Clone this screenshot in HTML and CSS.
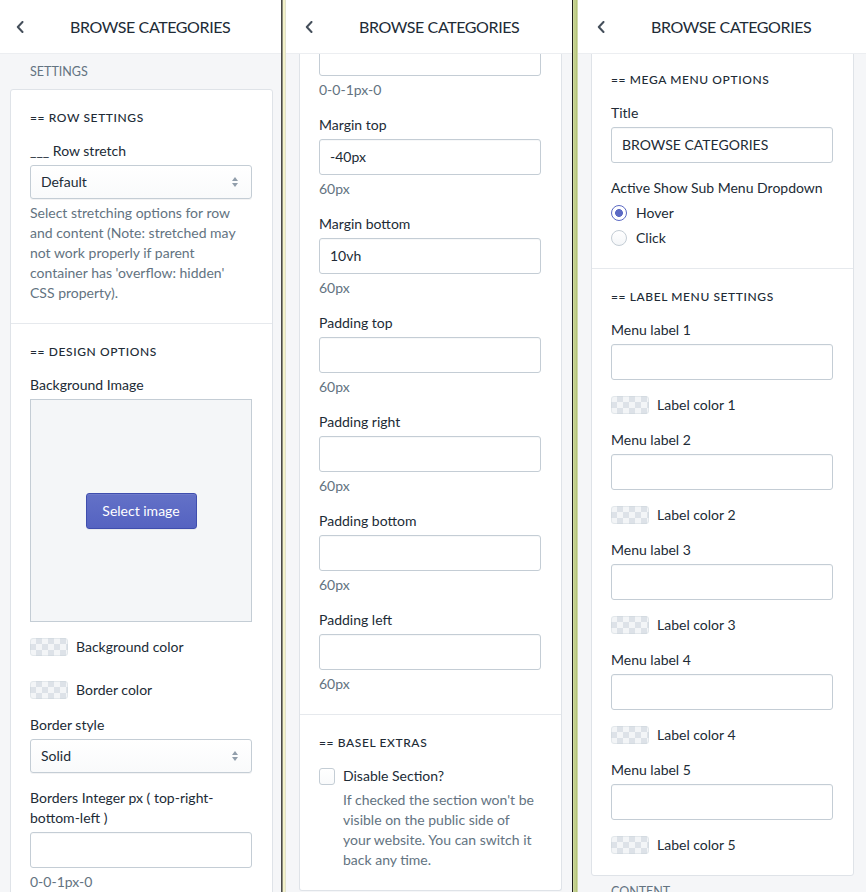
FILE: index.html
```html
<!DOCTYPE html>
<html lang="en">
<head>
<meta charset="utf-8">
<title>Browse Categories</title>
<link rel="stylesheet" href="styles.css">
</head>
<body>
<div class="screen">

  <section class="panel p1">
    <div class="sheet">
      <header class="topbar">
        <svg class="chev" width="8" height="12" viewBox="0 0 8 12"><path d="M6.5 1 L1.8 6 L6.5 11" fill="none" stroke="#454f5b" stroke-width="2" stroke-linecap="round" stroke-linejoin="round"/></svg>
        <h1 class="title">BROWSE CATEGORIES</h1>
      </header>
      <div class="scroll">
        <div class="content">
          <div class="heading">SETTINGS</div>
          <div class="card">
            <div class="sect">
              <div class="sect-title">== ROW SETTINGS</div>
              <div class="field">
                <div class="label">___ Row stretch</div>
                <div class="select"><span>Default</span><i class="arrows"></i></div>
                <div class="help">Select stretching options for row and content (Note: stretched may not work properly if parent container has 'overflow: hidden' CSS property).</div>
              </div>
            </div>
            <div class="sect">
              <div class="sect-title">== DESIGN OPTIONS</div>
              <div class="field">
                <div class="label">Background Image</div>
                <div class="imgbox"><button class="btn">Select image</button></div>
              </div>
              <div class="color-row"><span class="swatch"></span><span>Background color</span></div>
              <div class="color-row tight"><span class="swatch"></span><span>Border color</span></div>
              <div class="field">
                <div class="label">Border style</div>
                <div class="select"><span>Solid</span><i class="arrows"></i></div>
              </div>
              <div class="field">
                <div class="label">Borders Integer px ( top-right-bottom-left )</div>
                <div class="input"></div>
                <div class="help">0-0-1px-0</div>
              </div>
            </div>
          </div>
        </div>
      </div>
    </div>
  </section>

  <div class="sep sep-a"></div>

  <section class="panel p2">
    <div class="sheet">
      <header class="topbar">
        <svg class="chev" width="8" height="12" viewBox="0 0 8 12"><path d="M6.5 1 L1.8 6 L6.5 11" fill="none" stroke="#454f5b" stroke-width="2" stroke-linecap="round" stroke-linejoin="round"/></svg>
        <h1 class="title">BROWSE CATEGORIES</h1>
      </header>
      <div class="scroll">
        <div class="content">
          <div class="card open-top">
            <div class="sect">
              <div class="field first">
                <div class="input"></div>
                <div class="help">0-0-1px-0</div>
              </div>
              <div class="field">
                <div class="label">Margin top</div>
                <div class="input">-40px</div>
                <div class="help">60px</div>
              </div>
              <div class="field">
                <div class="label">Margin bottom</div>
                <div class="input">10vh</div>
                <div class="help">60px</div>
              </div>
              <div class="field">
                <div class="label">Padding top</div>
                <div class="input"></div>
                <div class="help">60px</div>
              </div>
              <div class="field">
                <div class="label">Padding right</div>
                <div class="input"></div>
                <div class="help">60px</div>
              </div>
              <div class="field">
                <div class="label">Padding bottom</div>
                <div class="input"></div>
                <div class="help">60px</div>
              </div>
              <div class="field">
                <div class="label">Padding left</div>
                <div class="input"></div>
                <div class="help">60px</div>
              </div>
            </div>
            <div class="sect">
              <div class="sect-title">== BASEL EXTRAS</div>
              <div class="check-row"><span class="checkbox"></span><span>Disable Section?</span></div>
              <div class="help indent">If checked the section won't be visible on the public side of your website. You can switch it back any time.</div>
            </div>
          </div>
        </div>
      </div>
    </div>
  </section>

  <div class="sep sep-b"></div>

  <section class="panel p3">
    <div class="sheet">
      <header class="topbar">
        <svg class="chev" width="8" height="12" viewBox="0 0 8 12"><path d="M6.5 1 L1.8 6 L6.5 11" fill="none" stroke="#454f5b" stroke-width="2" stroke-linecap="round" stroke-linejoin="round"/></svg>
        <h1 class="title">BROWSE CATEGORIES</h1>
      </header>
      <div class="scroll">
        <div class="content">
          <div class="card">
            <div class="sect">
              <div class="sect-title">== MEGA MENU OPTIONS</div>
              <div class="field">
                <div class="label">Title</div>
                <div class="input">BROWSE CATEGORIES</div>
              </div>
              <div class="field">
                <div class="label">Active Show Sub Menu Dropdown</div>
                <div class="radio-row"><span class="radio on"></span><span>Hover</span></div>
                <div class="radio-row"><span class="radio"></span><span>Click</span></div>
              </div>
            </div>
            <div class="sect">
              <div class="sect-title">== LABEL MENU SETTINGS</div>
              <div class="field">
                <div class="label">Menu label 1</div>
                <div class="input"></div>
              </div>
              <div class="color-row"><span class="swatch"></span><span>Label color 1</span></div>
              <div class="field">
                <div class="label">Menu label 2</div>
                <div class="input"></div>
              </div>
              <div class="color-row"><span class="swatch"></span><span>Label color 2</span></div>
              <div class="field">
                <div class="label">Menu label 3</div>
                <div class="input"></div>
              </div>
              <div class="color-row"><span class="swatch"></span><span>Label color 3</span></div>
              <div class="field">
                <div class="label">Menu label 4</div>
                <div class="input"></div>
              </div>
              <div class="color-row"><span class="swatch"></span><span>Label color 4</span></div>
              <div class="field">
                <div class="label">Menu label 5</div>
                <div class="input"></div>
              </div>
              <div class="color-row"><span class="swatch"></span><span>Label color 5</span></div>
            </div>
          </div>
          <div class="heading after">CONTENT</div>
        </div>
      </div>
    </div>
  </section>

</div>
</body>
</html>
```

FILE: styles.css
```css
* { box-sizing: border-box; }

html, body {
  margin: 0;
  padding: 0;
}

body {
  width: 866px;
  height: 892px;
  overflow: hidden;
  font-family: Lato, "Liberation Sans", sans-serif;
  font-size: 14px;
  line-height: 20px;
  color: #212b36;
  background: #f4f6f8;
}

.screen {
  display: flex;
  height: 892px;
}

.panel {
  flex: none;
  height: 892px;
  overflow: hidden;
  background: #f5f6f8;
}

.p1 { width: 281px; }
.p2 { width: 286px; }
.p3 { width: 288px; }

.sheet {
  width: 289px;
  height: 892px;
  display: flex;
  flex-direction: column;
}

.p1 .sheet { margin-left: -3px; }

.sep { flex: none; height: 892px; }
.sep-a {
  width: 5px;
  background: linear-gradient(to right, #4a4a46 0 1px, #8d8d80 1px 2px, #f3f2c9 2px 4px, #e2e2cc 4px 5px);
}
.sep-b {
  width: 6px;
  background: linear-gradient(to right, #1d1d1b 0 1px, #cdd99d 1px 2px, #c2cf8c 2px 4px, #b5c37b 4px 5px, #d0dbac 5px 6px);
}

/* header */
.topbar {
  position: relative;
  z-index: 2;
  flex: none;
  height: 54px;
  display: flex;
  align-items: center;
  padding-left: 19px;
  background: #fff;
  border-bottom: 1px solid #eceef1;
}

.chev { flex: none; display: block; }

.title {
  margin: 0 0 0 46px;
  font-size: 16px;
  font-weight: 400;
  color: #212b36;
  letter-spacing: -0.4px;
  white-space: nowrap;
}

.scroll {
  flex: 1;
  overflow: hidden;
}

.p2 .content { margin-top: -14px; }
.p3 .content { margin-top: -3px; }

.heading {
  padding: 8px 20px 7px 33px;
  font-size: 12.5px;
  color: #637381;
  letter-spacing: 0;
}
.heading.after { padding-top: 6px; }

.card {
  margin: 0 13px 0 13px;
  background: #fff;
  border: 1px solid #dfe3e8;
  border-radius: 3px;
}
.card.open-top {
  border-top: none;
  border-radius: 0 0 3px 3px;
}

.sect {
  padding: 19px 20px 20px 19px;
}
.sect + .sect { border-top: 1px solid #e6e9ed; }
.open-top .sect:first-child { padding-top: 0; }

.sect-title {
  line-height: 18px;
  font-size: 12px;
  font-weight: 500;
  letter-spacing: 0.6px;
  color: #212b36;
}

.field { margin-top: 14px; }
.field + .field, .color-row + .field { margin-top: 15px; }
.field.first { margin-top: 0; }

.label { line-height: 20px; }

.input, .select {
  margin-top: 4px;
  height: 36px;
  display: flex;
  align-items: center;
  padding: 0 10px;
  border: 1px solid #c4cdd5;
  border-radius: 3px;
  background: #fff;
  box-shadow: inset 0 1px 0 0 rgba(99, 115, 129, 0.05);
  color: #212b36;
}
.field.first .input { margin-top: 0; }

.select {
  height: 34px;
  justify-content: space-between;
  background: linear-gradient(#fff, #f9fafb);
  box-shadow: 0 1px 0 0 rgba(22, 29, 37, 0.05);
  padding-right: 12px;
}

.arrows {
  width: 7px;
  height: 10px;
  position: relative;
  display: block;
}
.arrows::before, .arrows::after {
  content: "";
  position: absolute;
  left: 0;
  border-left: 3.5px solid transparent;
  border-right: 3.5px solid transparent;
}
.arrows::before { top: 0; border-bottom: 4px solid #919eab; }
.arrows::after { bottom: 0; border-top: 4px solid #919eab; }

.help {
  margin-top: 4px;
  color: #637381;
  line-height: 20px;
}
.help.indent { padding-left: 24px; padding-right: 4px; }

.imgbox {
  margin-top: 4px;
  height: 223px;
  border: 1px solid #c4cdd5;
  background: #f4f6f8;
  display: flex;
  align-items: center;
  justify-content: center;
}

.btn {
  width: 111px;
  height: 36px;
  border: 1px solid #3f4eae;
  border-radius: 3px;
  background: linear-gradient(180deg, #6371c7, #5563c1);
  box-shadow: inset 0 1px 0 0 #6f7bcb, 0 1px 0 0 rgba(22, 29, 37, 0.05);
  color: #fff;
  font-family: inherit;
  font-size: 14px;
  padding: 0;
}

.color-row {
  margin-top: 15px;
  display: flex;
  align-items: center;
  gap: 8px;
  line-height: 20px;
}
.color-row.tight { margin-top: 23px; }

.swatch {
  flex: none;
  width: 38px;
  height: 18px;
  border-radius: 3px;
  background-color: #f3f5f7;
  background-image: conic-gradient(#dde2e8 25%, transparent 0 50%, #dde2e8 0 75%, transparent 0);
  background-size: 12px 12px;
  box-shadow: inset 0 0 0 1px rgba(196, 205, 213, 0.35);
}

.radio-row {
  display: flex;
  align-items: center;
  gap: 9px;
  height: 20px;
  margin-top: 5px;
}

.radio {
  flex: none;
  width: 16px;
  height: 16px;
  border-radius: 50%;
  border: 1px solid #c4cdd5;
  background: linear-gradient(#fff, #f4f6f8);
}
.radio.on {
  border: 1.5px solid #5c6ac4;
  background: radial-gradient(circle, #5c6ac4 0 3.6px, #fff 4.2px);
}

.check-row {
  margin-top: 14px;
  display: flex;
  align-items: center;
  gap: 8px;
  height: 20px;
}

.checkbox {
  flex: none;
  width: 16px;
  height: 17px;
  border: 1px solid #c4cdd5;
  border-radius: 3px;
  background: linear-gradient(#fff, #f9fafb);
}
```
